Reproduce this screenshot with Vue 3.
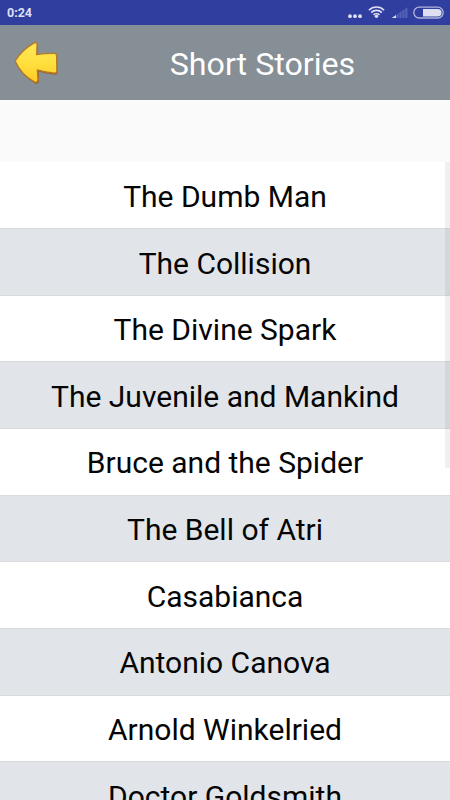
<script setup>
const stories = [
  'The Dumb Man',
  'The Collision',
  'The Divine Spark',
  'The Juvenile and Mankind',
  'Bruce and the Spider',
  'The Bell of Atri',
  'Casabianca',
  'Antonio Canova',
  'Arnold Winkelried',
  'Doctor Goldsmith',
]
</script>

<template>
  <div class="screen">
    <div class="status">
      <span class="time">0:24</span>
      <svg class="indicators" width="102" height="25" viewBox="0 0 102 25">
        <g fill="#dfe1f3">
          <circle cx="2" cy="16.2" r="1.9" />
          <circle cx="7" cy="16.2" r="1.9" />
          <circle cx="12" cy="16.2" r="1.9" />
          <circle cx="28.5" cy="16.3" r="1.7" />
        </g>
        <g fill="none" stroke="#dfe1f3" stroke-width="1.6">
          <path d="M20.9 10.2a10.7 10.7 0 0 1 15.2 0" />
          <path d="M23.2 12.6a7.5 7.5 0 0 1 10.6 0" />
          <path d="M25.5 14.9a4.3 4.3 0 0 1 6 0" />
        </g>
        <path d="M43.8 18l4.2-3V18z" fill="#dfe1f3" />
        <g fill="#5562b5">
          <path d="M48.5 14.5l2.2-1.4V18h-2.2z" />
          <path d="M51.4 12.5l2.2-1.4V18h-2.2z" />
          <path d="M54.3 10.5l2.2-1.4V18h-2.2z" />
          <path d="M57.2 8.7l2.2-1.4V18h-2.2z" />
        </g>
        <rect x="65.8" y="7.2" width="29.4" height="10.8" rx="5.4" fill="none" stroke="#aeb4dd" stroke-width="1.3" />
        <path d="M75 8.9h14.8a3.7 3.7 0 0 1 0 7.5H75z" fill="#dfe1f3" />
      </svg>
    </div>
    <header class="bar">
      <svg class="back" width="46" height="46" viewBox="0 0 46 46">
        <defs>
          <linearGradient id="gold" x1="0" y1="0" x2="0" y2="1">
            <stop offset="0" stop-color="#ffe75b" />
            <stop offset="0.55" stop-color="#ffdf3b" />
            <stop offset="1" stop-color="#ffc928" />
          </linearGradient>
        </defs>
        <path d="M2.6 22.5Q9.5 10.5 21.5 3.6Q24.8 2.4 24.7 6L24.2 14.5Q33 13.1 42 13.5Q44 13.7 44.1 16L44.7 32Q44.5 34.9 41.6 34.7Q33 33.7 25.6 31.5L26 40.5Q25.8 44.8 22 43.6Q8.5 36 2.6 22.5Z" fill="#9a6129" />
        <path d="M2.2 21Q9 9.6 21.3 2.9Q24.1 1.8 24.1 5L23.6 14.6Q32.5 13.1 41.6 13.3Q43.5 13.5 43.6 15.6L43.9 31Q43.7 33.3 41.3 33.1Q32.5 32.4 24.3 29.9L25 39.5Q24.8 43.2 21.2 41.8Q8 34.5 2.2 21Z" fill="url(#gold)" stroke="#b57927" stroke-width="1.3" stroke-linejoin="round" />
      </svg>
      <h1 class="title">Short Stories</h1>
    </header>
    <div class="spacer"></div>
    <main class="list">
      <div v-for="story in stories" :key="story" class="row">{{ story }}</div>
      <div class="scrollbar"></div>
    </main>
  </div>
</template>

<style>
body {
  margin: 0;
}
</style>

<style scoped>
.screen {
  width: 450px;
  height: 800px;
  overflow: hidden;
  display: flex;
  flex-direction: column;
  background: #fafafa;
  font-family: Roboto, "Liberation Sans", sans-serif;
}
.status {
  flex: none;
  height: 25px;
  display: flex;
  align-items: center;
  justify-content: space-between;
  padding-left: 7px;
  background: #303e9f;
}
.time {
  color: #dfe1f3;
  font-size: 12.5px;
  font-weight: 700;
  line-height: 26px;
}
.bar {
  flex: none;
  height: 75px;
  display: flex;
  align-items: center;
  background: #868e96;
}
.back {
  flex: none;
  margin-left: 13px;
  margin-right: 12px;
}
.title {
  flex: 1;
  margin: 0;
  padding: 3px 0 0 4px;
  text-align: center;
  color: #fff;
  font-size: 32.2px;
  font-weight: 400;
  line-height: 75px;
}
.spacer {
  flex: none;
  height: 62px;
}
.list {
  position: relative;
  flex: 1;
  min-height: 0;
  overflow: hidden;
  padding-top: 0.25px;
}
.row {
  box-sizing: border-box;
  height: 66.67px;
  padding-top: 1.6px;
  border-bottom: 1px solid #d9dbdd;
  background: #fff;
  color: #050505;
  font-size: 30px;
  line-height: 66px;
  text-align: center;
}
.row:nth-child(even) {
  background: #e1e4e9;
}
.scrollbar {
  position: absolute;
  top: 0;
  right: 0;
  width: 5px;
  height: 306px;
  background: rgba(0, 0, 0, 0.06);
}
</style>
